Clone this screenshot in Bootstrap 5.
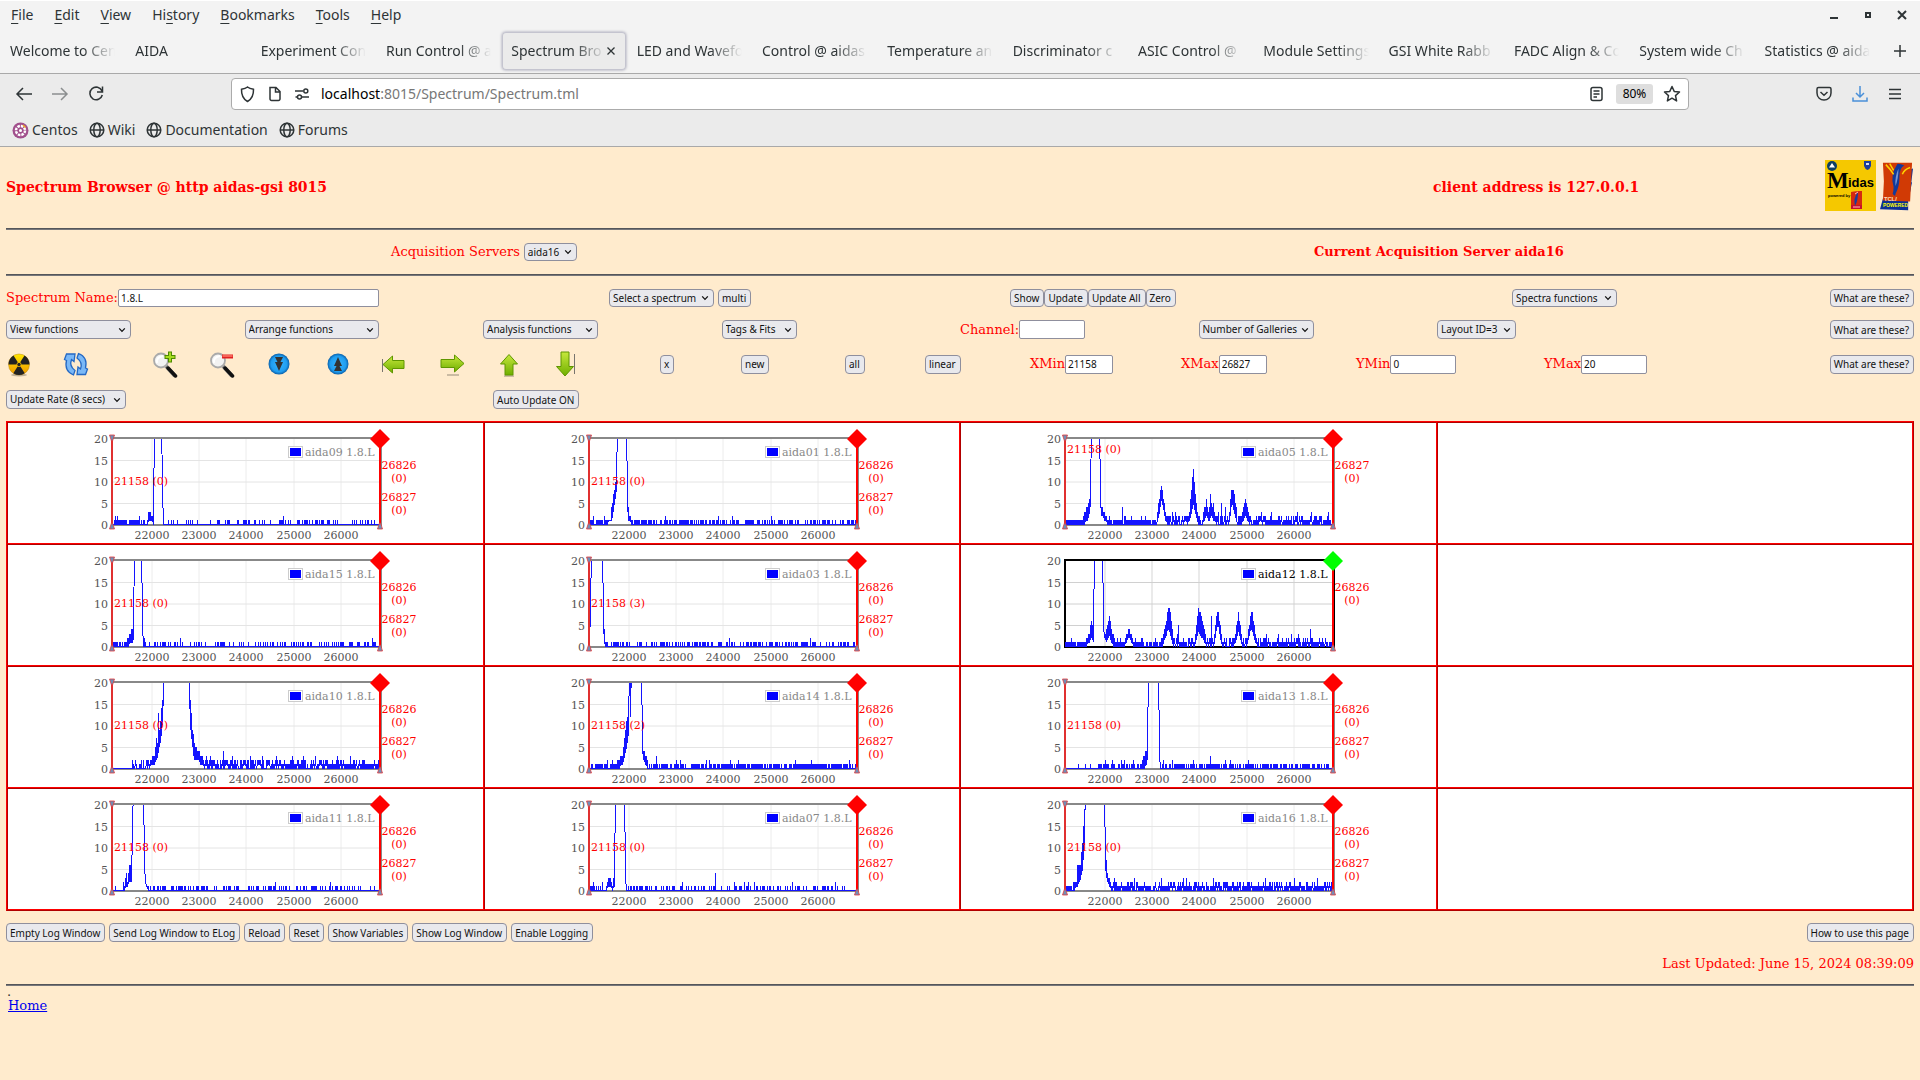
<!DOCTYPE html>
<html lang="en">
<head>
<meta charset="utf-8">
<meta name="viewport" content="width=device-width, initial-scale=1">
<title>Spectrum Browser @ aidas-gsi</title>
<link href="https://cdn.jsdelivr.net/npm/bootstrap@5.3.0/dist/css/bootstrap.min.css" rel="stylesheet">
<style>
:root { --ui: "Noto Sans", "Open Sans", sans-serif; --doc: "DejaVu Serif", serif; }
body { background: #ffebcd; font-family: var(--doc); font-size: 13px; line-height: 16px; color: #f00; }
button { font-family: var(--ui); }
/* browser frame */
.browser { font-family: var(--ui); font-size: 14px; line-height: 20px; color: #2e3436; background: #f3f3f3; border-top: 1px solid #fff; }
.browser button { border: 0; background: none; padding: 0; color: inherit; font-size: inherit; line-height: inherit; }
.browser svg { fill: none; stroke: #2e3436; stroke-width: 1.5; display: block; }
.menus { height: 28px; padding: 0 11px; gap: 21px; }
.menus u { text-underline-offset: 3px; }
.wm { gap: 20px; }
.tabs { height: 44px; }
.tab-item { flex: 1 1 0; min-width: 0; height: 38px; padding: 0 10px; border-radius: 4px; }
.tab-item a { color: inherit; text-decoration: none; overflow: hidden; white-space: nowrap; flex: 1; -webkit-mask-image: linear-gradient(to left, transparent, #000 32px); mask-image: linear-gradient(to left, transparent, #000 32px); }
.tab-item.on { background: #ebebeb; box-shadow: 0 0 3px #9a9aac, inset 0 0 0 1px #c4c4cf; margin: 0 1px; padding: 0 9px; }
.plus { width: 40px; }
.tools { background: #ebebeb; border-top: 1px solid #a9a9a9; border-bottom: 1px solid #a9a9a9; height: 74px; padding-top: 4px; }
.bar { height: 32px; }
.side-l { width: 231px; padding-left: 15px; gap: 18px; }
.side-r { width: 231px; padding-right: 17px; gap: 18px; }
.urlbox { height: 32px; background: #fff; border: 1px solid #ababab; border-radius: 4px; padding: 0 7px; gap: 10px; }
.url { color: #777; }
.url b { font-weight: 400; color: #000; }
.urlbox .zoomed { background: #dedede; border-radius: 3px; font-size: 12px; width: 37px; height: 20px; text-align: center; color: #000; }
.marks { height: 40px; padding: 0 12px; gap: 11px; }
.marks a { color: inherit; text-decoration: none; gap: 3px; }
/* page */
.page { padding: 13px 6px 0; }
.rule { height: 2px; background: #55565a; border-bottom: 1px solid #77777b; }
.last-rule { margin-top: 12px; }
.grid { display: grid; align-items: center; }
.g-title { grid-template-columns: 1427fr 384fr 97fr; height: 51px; margin-bottom: 17px; }
.g-title h1, .g-title h2 { font-size: 14px; font-weight: 700; line-height: 20px; margin: 2px 0 0; }
.g-acq { grid-template-columns: 385fr 923fr 600fr; height: 18px; margin: 13px 0; }
.g-name { grid-template-columns: 603fr 401fr 502fr 311fr 91fr; height: 18px; margin: 13px 0; }
.g-func { grid-template-columns: repeat(8, 1fr); height: 19px; margin-bottom: 11px; }
.g-tool { grid-template-columns: 57fr 89fr 57fr 57fr 59fr 56fr 58fr 57fr 56fr 108fr 81fr 104fr 80fr 105fr 151fr 175fr 188fr 370fr; height: 28px; margin-bottom: 12px; }
.g-rate { grid-template-columns: 487fr 1421fr; height: 19px; margin-bottom: 12px; }
.grid > div { display: flex; align-items: center; min-width: 0; white-space: nowrap; }
.grid > .end { justify-content: flex-end; }
.ctl { height: 19px; font: 10px/16px var(--ui); color: #111; background-color: #e9e9ed; border: 1px solid #8f8f9d; border-radius: 4px; padding: 0 4px 0 3px; white-space: nowrap; }
.g-acq .ctl, .g-name .ctl { height: 18px; }
select.ctl { appearance: none; padding: 0 4px 1px 3px; background-image: url("data:image/svg+xml,%3Csvg xmlns='http://www.w3.org/2000/svg' width='8' height='8'%3E%3Cpath d='M1.2 2.4 4 5.4 6.8 2.4' fill='none' stroke='%23111' stroke-width='1.3'/%3E%3C/svg%3E"); background-repeat: no-repeat; background-position: right 4px center; }
input.ctl { background: #fff; border-radius: 2px; padding: 0 2px; }
.w53 { width: 53px; } .w75 { width: 75px; } .w79 { width: 79px; } .w105 { width: 105px; } .w115 { width: 115px; } .w120 { width: 120px; } .w125 { width: 125px; } .w134 { width: 134px; }
.i48 { width: 48px; } .i66 { width: 66px; } .i261 { width: 261px; }
.ico { border: 0; background: none; padding: 0; width: 26px; height: 28px; }
.ico svg { display: block; }
.gallery { width: 100%; table-layout: fixed; border-collapse: separate; border-spacing: 0; border: 1px solid; border-color: #f00 #b00000 #b00000 #f00; background: #fff; margin-bottom: 12px; }
.gallery td { height: 122px; padding: 0; border: 1px solid; border-color: #b00000 #f00 #f00 #b00000; text-align: center; vertical-align: top; }
.gallery svg { display: block; margin: 0 auto; overflow: visible; font: 11px var(--doc); }
.foot { height: 19px; gap: 4px; margin-bottom: 14px; }
.dot { color: #333; line-height: 12px; padding-left: 1px; }
.home { color: #00e; margin-left: 2px; }
</style>
<script src="https://cdn.jsdelivr.net/npm/bootstrap@5.3.0/dist/js/bootstrap.bundle.min.js"></script>
</head>
<body>
<header class="browser">
  <div class="menus d-flex align-items-center">
    <button><u>F</u>ile</button><button><u>E</u>dit</button><button><u>V</u>iew</button><button>Hi<u>s</u>tory</button><button><u>B</u>ookmarks</button><button><u>T</u>ools</button><button><u>H</u>elp</button>
    <div class="wm d-flex ms-auto">
      <button aria-label="Minimize"><svg width="14" height="14" viewBox="0 0 14 14"><path d="M3 10h8" stroke-width="2"/></svg></button>
      <button aria-label="Restore"><svg width="14" height="14" viewBox="0 0 14 14"><path d="M5 5h4v4H5z" stroke-width="2"/></svg></button>
      <button aria-label="Close"><svg width="14" height="14" viewBox="0 0 14 14"><path d="M3 3l8 8M11 3l-8 8" stroke-width="2"/></svg></button>
    </div>
  </div>
  <nav class="tabs d-flex align-items-center" id="tabs"></nav>
  <div class="tools">
    <div class="bar d-flex">
      <div class="side-l d-flex align-items-center">
        <button aria-label="Back"><svg width="18" height="18" viewBox="0 0 18 18"><path d="M17 9H2M8 3L2 9l6 6"/></svg></button>
        <button aria-label="Forward" class="opacity-50"><svg width="18" height="18" viewBox="0 0 18 18"><path d="M1 9h15M10 3l6 6-6 6"/></svg></button>
        <button aria-label="Reload"><svg width="18" height="18" viewBox="0 0 18 18"><path d="M15 6A6.3 6.3 0 1 0 15.3 10M15.5 1.5V7H10"/></svg></button>
      </div>
      <div class="urlbox d-flex align-items-center flex-grow-1">
        <svg width="17" height="18" viewBox="0 0 17 18"><path d="M8.500 2C6.500 3.500 4 4 2.500 4.300 2.300 10 4 14 8.500 16.500 13 14 14.700 10 14.500 4.300 13 4 10.500 3.500 8.500 2z"/></svg>
        <svg width="17" height="18" viewBox="0 0 17 18"><path d="M4 2.500h6l4 4V14a1.500 1.500 0 0 1-1.500 1.500h-7A1.500 1.500 0 0 1 4 14zM9.500 2.500V7H14"/></svg>
        <svg width="18" height="18" viewBox="0 0 18 18"><path d="M2 6h8M16 12H9M2.500 12h2"/><circle cx="12.800" cy="6" r="2"/><circle cx="6.500" cy="12" r="2"/></svg>
        <span class="url text-nowrap" role="textbox" aria-label="Address"><b>localhost</b>:8015/Spectrum/Spectrum.tml</span>
        <svg class="ms-auto" width="17" height="18" viewBox="0 0 17 18"><rect x="2" y="2.500" width="11" height="13" rx="2"/><path d="M4.500 6h6M4.500 9h6M4.500 12h3.500" stroke-width="1.300"/></svg>
        <button class="zoomed">80%</button>
        <svg width="18" height="18" viewBox="0 0 18 18"><path d="M9 1.500l2.200 4.900 5.300.6-4 3.600 1.100 5.300L9 13.200l-4.600 2.700 1.100-5.300-4-3.600 5.300-.6z" stroke-linejoin="round"/></svg>
      </div>
      <div class="side-r d-flex align-items-center justify-content-end">
        <button aria-label="Save to Pocket"><svg width="18" height="18" viewBox="0 0 18 18"><path d="M3.500 2.500h11a1.500 1.500 0 0 1 1.500 1.500v4c0 9.300-14 9.300-14 0V4a1.500 1.500 0 0 1 1.500-1.500zM5.500 7L9 10.200 12.500 7"/></svg></button>
        <button aria-label="Downloads"><svg width="18" height="18" viewBox="0 0 18 18"><path stroke="#4a90d9" d="M9 1v11M5 8l4 4 4-4M2 12.500V16h14v-3.500"/></svg></button>
        <button aria-label="Menu"><svg width="16" height="18" viewBox="0 0 16 18"><path d="M2 4.500h12M2 9h12M2 13.500h12"/></svg></button>
      </div>
    </div>
    <div class="marks d-flex align-items-center">
      <a href="#" class="d-flex align-items-center"><svg width="17" height="17" viewBox="0 0 17 17"><circle cx="8.500" cy="8.500" r="8" fill="#a14f8c" stroke="none"/><circle cx="8.500" cy="8.500" r="4.500" stroke="#fff" stroke-width="2.500" stroke-dasharray="2.500 1"/><circle cx="8.500" cy="8.500" r="1.500" fill="#fff" stroke="none"/><path d="M11 3l2.500 2.500" stroke="#efa724"/></svg>Centos</a>
      <a href="#" class="d-flex align-items-center"><svg width="16" height="16" viewBox="0 0 16 16"><use href="#globe"/></svg>Wiki</a>
      <a href="#" class="d-flex align-items-center"><svg width="16" height="16" viewBox="0 0 16 16"><use href="#globe"/></svg>Documentation</a>
      <a href="#" class="d-flex align-items-center"><svg width="16" height="16" viewBox="0 0 16 16"><g id="globe"><circle cx="8" cy="8" r="6.800"/><ellipse cx="8" cy="8" rx="3.200" ry="6.800"/><path d="M1 8h14"/></g></svg>Forums</a>
    </div>
  </div>
</header>

<main class="page">
  <div class="grid g-title">
    <h1>Spectrum Browser @ http aidas-gsi 8015</h1>
    <h2>client address is 127.0.0.1</h2>
    <div class="end">
      <svg width="51" height="51" viewBox="0 0 51 51" class="me-1"><rect width="51" height="51" fill="#f5c800"/><circle cx="7" cy="6" r="5" fill="#0e3f63"/><path d="M4 7.500h6L7 3z" fill="#fff"/><path d="M39 1h7v5q-1 3-3.500 4Q40 9 39 6z" fill="#1c3c9c"/><path d="M41 3h3v2h-3z" fill="#d9e0ee"/><text x="2" y="28" font-family="Liberation Serif, serif" font-size="23" font-weight="700">M</text><text x="23" y="27" font-family="Liberation Sans, sans-serif" font-size="13" font-weight="700">idas</text><text x="3" y="37" font-family="Liberation Sans, sans-serif" font-size="4" font-weight="700">powered by</text><path d="M26 32l11-1v18H26z" fill="#c8102e"/><path d="M26 32l11-1v14H26z" fill="#d42a10"/><path d="M33 32q-5 6-3 14 3-5 3-14z" fill="#173c9e"/><path d="M30 34l3-2M28 47h7" stroke="#fbb" stroke-width="1"/></svg>
      <svg width="34" height="51" viewBox="0 0 35 51"><path d="M3 39l-3 11 29 1v-9l4-20z" fill="#0b2f96"/><path d="M28 10l6-2-4 32z" fill="#0b2f96"/><path d="M3 2l30 0-2 40-28-1 1-20z" fill="#d13a05"/><path d="M18 3q-8 12-4 24 0 5-1 7 3 4 3 0 4-7 4-17 0-10 5-12-3-2-7-2z" fill="#123a9a"/><path d="M19 8q-4 9-3 18 3-8 3-18z" fill="#7696d4"/><path d="M6 4q5 5 8 10M23 14q2-5 8-7M10 3l4 7" stroke="#ffd400" stroke-width="1.500" fill="none"/><text x="4" y="41" font-family="Liberation Sans, sans-serif" font-size="6" fill="#ffe0c0" font-weight="700">TCL/</text><text x="3" y="48" font-family="Liberation Sans, sans-serif" font-size="5" fill="#ff0" font-weight="700">POWERED</text></svg>
    </div>
  </div>
  <div class="rule"></div>
  <div class="grid g-acq">
    <div></div>
    <div><label for="server" class="me-1">Acquisition Servers</label><select id="server" class="ctl w53"><option>aida16</option></select></div>
    <div class="fw-bold">Current Acquisition Server aida16</div>
  </div>
  <div class="rule"></div>
  <div class="grid g-name">
    <div><label for="sname">Spectrum Name:</label><input id="sname" class="ctl i261" value="1.8.L"></div>
    <div><select class="ctl w105 me-1" aria-label="Spectrum"><option>Select a spectrum</option></select><button class="ctl">multi</button></div>
    <div><button class="ctl">Show</button><button class="ctl">Update</button><button class="ctl">Update All</button><button class="ctl">Zero</button></div>
    <div><select class="ctl w105" aria-label="Spectra functions"><option>Spectra functions</option></select></div>
    <div class="end"><button class="ctl">What are these?</button></div>
  </div>
  <div class="grid g-func">
    <div><select class="ctl w125" aria-label="View"><option>View functions</option></select></div>
    <div><select class="ctl w134" aria-label="Arrange"><option>Arrange functions</option></select></div>
    <div><select class="ctl w115" aria-label="Analysis"><option>Analysis functions</option></select></div>
    <div><select class="ctl w75" aria-label="Tags"><option>Tags &amp; Fits</option></select></div>
    <div><label for="chan">Channel:</label><input id="chan" class="ctl i66"></div>
    <div><select class="ctl w115" aria-label="Galleries"><option>Number of Galleries</option></select></div>
    <div><select class="ctl w79" aria-label="Layout"><option>Layout ID=3</option></select></div>
    <div class="end"><button class="ctl">What are these?</button></div>
  </div>
  <svg width="0" height="0" class="position-absolute" aria-hidden="true"><defs>
    <linearGradient id="gy" x2="0" y2="1"><stop stop-color="#ffe600"/><stop offset="1" stop-color="#f09800"/></linearGradient>
    <linearGradient id="gg" x2="0" y2="1"><stop stop-color="#c6e83c"/><stop offset="1" stop-color="#6fae00"/></linearGradient>
    <radialGradient id="gb"><stop stop-color="#38b6ff"/><stop offset=".75" stop-color="#1f9df0"/><stop offset="1" stop-color="#0a5fa8"/></radialGradient>
    <g id="lens"><path d="M14 15l9 10" stroke="#888" stroke-width="4"/><path d="M16 17l7.500 8" stroke="#111" stroke-width="3.500" stroke-linecap="round"/><circle cx="9" cy="9.500" r="7" fill="#f2f2f2" stroke="#aaa" stroke-width="1.800"/><path d="M5 12q-1-6 6-7" stroke="#fff" stroke-width="2" fill="none"/></g>
  </defs></svg>
  <div class="grid g-tool">
    <div><button class="ico" aria-label="Zero all"><svg width="26" height="28" viewBox="0 0 26 28"><ellipse cx="13" cy="25" rx="8" ry="1.500" fill="#000" opacity=".25"/><circle cx="13" cy="14.500" r="10.500" fill="url(#gy)" stroke="#b8860b" stroke-width=".5"/><path d="M11.800 12.200L7.500 5.500Q2.500 8.500 2.500 14.500H10.500Q10.600 13 11.800 12.200zM14.200 12.200l4.300-6.700Q23.500 8.500 23.500 14.500H15.500Q15.400 13 14.200 12.200zM13 17q1 0 1.400-.4l4.300 6.600Q13 27 7.300 23.200l4.300-6.600Q12 17 13 17z" fill="#222"/><circle cx="13" cy="14.500" r="1.700" fill="#222"/></svg></button></div>
    <div><button class="ico" aria-label="Refresh"><svg width="26" height="28" viewBox="0 0 26 28"><path d="M10.500 25Q1 21 3.500 10.500L1.500 9.500 3.500 4h8.500L11 11.500 8.500 9.500Q6 16 12 20.500zM15.500 3.500q9.500 3.500 7 14.500l2 1-2 5.500h-8.500l1-7.500 2.500 2Q20 12.500 14 8z" fill="#7ab8f7" stroke="#2468c4" stroke-width="1.300"/></svg></button></div>
    <div><button class="ico" aria-label="Zoom in"><svg width="26" height="28" viewBox="0 0 26 28"><use href="#lens" y="1"/><path d="M18 1.500v11M12.500 7h11" stroke="#4e8a00" stroke-width="4"/><path d="M18 2.500v9M13.500 7h9" stroke="#a6dc20" stroke-width="2"/></svg></button></div>
    <div><button class="ico" aria-label="Zoom out"><svg width="26" height="28" viewBox="0 0 26 28"><use href="#lens" y="1"/><path d="M13 6.500h11" stroke="#e02020" stroke-width="4"/><path d="M13.500 6h10" stroke="#ff7a6a" stroke-width="1.500"/></svg></button></div>
    <div><button class="ico" aria-label="Compress"><svg width="26" height="28" viewBox="0 0 26 28"><circle cx="13" cy="14" r="10.500" fill="url(#gb)"/><path d="M9 7h8l-2.500 5H17l-4 9-4-9h2.500z" fill="#333"/></svg></button></div>
    <div><button class="ico" aria-label="Expand"><svg width="26" height="28" viewBox="0 0 26 28"><circle cx="13" cy="14" r="10.500" fill="url(#gb)"/><path d="M9 21h8l-2.500-5H17l-4-9-4 9h2.500z" fill="#333"/></svg></button></div>
    <div><button class="ico" aria-label="Left"><svg width="26" height="28" viewBox="0 0 26 28"><path d="M1.500 9v13" stroke="#555" stroke-width=".8"/><path d="M2 14.500L11.500 6v4.500H23v8H11.500V23z" fill="url(#gg)" stroke="#5f9600"/></svg></button></div>
    <div><button class="ico" aria-label="Right"><svg width="26" height="28" viewBox="0 0 26 28"><path d="M8 25h12" stroke="#000" opacity=".2" stroke-width="2"/><path d="M25 13.500L15.500 5v4.500H2v8h13.500V22z" fill="url(#gg)" stroke="#5f9600"/></svg></button></div>
    <div><button class="ico" aria-label="Up"><svg width="26" height="28" viewBox="0 0 26 28"><path d="M8 26h10" stroke="#000" opacity=".2" stroke-width="2"/><path d="M13 4.500L4.500 14H9v11h8V14h4.500z" fill="url(#gg)" stroke="#5f9600"/></svg></button></div>
    <div><button class="ico" aria-label="Down"><svg width="26" height="28" viewBox="0 0 26 28"><path d="M22.500 4v20" stroke="#555" stroke-width=".8"/><path d="M13 26L4.500 16.500H9V2h8v14.500h4.500z" fill="url(#gg)" stroke="#5f9600"/></svg></button></div>
    <div><button class="ctl">x</button></div>
    <div><button class="ctl">new</button></div>
    <div><button class="ctl">all</button></div>
    <div><button class="ctl">linear</button></div>
    <div><label for="xmin">XMin</label><input id="xmin" class="ctl i48" value="21158"></div>
    <div><label for="xmax">XMax</label><input id="xmax" class="ctl i48" value="26827"></div>
    <div><label for="ymin">YMin</label><input id="ymin" class="ctl i66" value="0"></div>
    <div class="justify-content-between"><span class="d-flex align-items-center"><label for="ymax">YMax</label><input id="ymax" class="ctl i66" value="20"></span><button class="ctl">What are these?</button></div>
  </div>
  <div class="grid g-rate">
    <div><select class="ctl w120" aria-label="Update rate"><option>Update Rate (8 secs)</option></select></div>
    <div><button class="ctl">Auto Update ON</button></div>
  </div>
  <table class="gallery" id="gallery"></table>
  <div class="foot d-flex">
    <button class="ctl">Empty Log Window</button><button class="ctl">Send Log Window to ELog</button><button class="ctl">Reload</button><button class="ctl">Reset</button><button class="ctl">Show Variables</button><button class="ctl">Show Log Window</button><button class="ctl">Enable Logging</button>
    <button class="ctl ms-auto">How to use this page</button>
  </div>
  <div class="text-end">Last Updated: June 15, 2024 08:39:09</div>
  <div class="rule last-rule"></div>
  <div class="dot">.</div>
  <a href="#" class="home">Home</a>
</main>
<script>
const tabs = ["Welcome to Cen", "AIDA", "Experiment Con", "Run Control @ a", "Spectrum Bro", "LED and Wavefo", "Control @ aidas", "Temperature an", "Discriminator c", "ASIC Control @", "Module Settings", "GSI White Rabb", "FADC Align & Co", "System wide Ch", "Statistics @ aida"];
document.getElementById("tabs").innerHTML = tabs.map((t, i) => i === 4
  ? `<div class="tab-item on d-flex align-items-center"><a href="#">${t}</a><button aria-label="Close tab"><svg width="12" height="12" viewBox="0 0 12 12"><path d="M2.500 2.500l7 7M9.500 2.500l-7 7" stroke-width="1.300"/></svg></button></div>`
  : `<div class="tab-item d-flex align-items-center"><a href="#">${t.replace("&", "&amp;")}</a></div>`).join("")
  + `<button class="plus d-flex justify-content-center" aria-label="New tab"><svg width="14" height="14" viewBox="0 0 14 14"><path d="M7 1v12M1 7h12"/></svg></button>`;

/* env: lists of [x, low, high] envelope points; noise: [from, to, chance of 1, chance of 2]; sp: single spikes [x, height] */
const T = 25;
const plots = [
 {n:"09", env:[[[35,0,1],[37,1,3],[39,1,2],[41,0,2],[42,T,T],[49,T,T],[50,8,8],[51,0,0]]], noise:[[0,25,.85,0],[25,35,.4,0],[51,262,.34,0]], sp:[[3,2],[5,2],[27,2],[36,3],[171,2]]},
 {n:"01", env:[[[17,0,1],[21,1,1],[22,1,4],[25,5,8],[27,8,11],[28,T,T],[37,T,T],[38,5,8],[39,1,4],[40,1,2],[42,0,1]]], noise:[[0,17,.75,0],[42,200,.62,0],[200,268,.38,0]], sp:[[4,2],[15,2],[76,2],[129,2],[143,2],[182,2]]},
 {n:"05", env:[[[18,0,2],[22,1,4],[24,3,6],[25,5,8],[26,T,T],[34,T,T],[35,6,9],[36,2,4],[40,1,2],[42,0,1]],[[92,1,3],[94,3,6],[96,6,9],[98,4,6],[100,1,3]],[[124,1,3],[126,3,8],[128,5,13],[130,3,7],[132,1,3]],[[138,1,3],[141,2,5],[143,1,3],[146,2,5],[149,1,3]],[[164,1,3],[166,5,8],[168,4,8],[171,1,4]],[[177,1,3],[180,2,6],[183,1,3]]], noise:[[0,17,.95,0],[42,92,.9,.08],[92,185,.92,.65],[185,268,.92,.4]], sp:[[57,4],[59,2],[103,2],[107,3],[110,3],[141,6],[145,7],[148,5],[153,3],[156,5],[160,4],[196,3],[206,3],[232,3],[246,3],[263,3]]},
 {n:"15", env:[[[15,0,2],[18,1,3],[20,1,4],[21,2,5],[22,T,T],[29,T,T],[30,5,5],[31,0,2],[33,0,1]]], noise:[[0,15,.85,0],[33,264,.36,0]], sp:[[68,2],[260,2]]},
 {n:"03", lab:3, env:[[[0,3,3],[1,6,10],[2,T,T],[13,T,T],[14,5,7],[15,1,4],[16,0,1]]], noise:[[16,268,.5,0]], sp:[[140,2],[221,2]]},
 {n:"12", env:[[[19,0,1],[24,1,3],[26,2,6],[28,1,4],[29,T,T],[37,T,T],[38,5,5],[39,2,2],[41,1,4],[44,3,7],[46,1,4],[49,0,2]],[[60,1,2],[64,2,4],[67,1,2]],[[98,1,3],[101,3,6],[103,4,9],[105,3,8],[107,1,4]],[[130,1,3],[133,4,9],[136,2,7],[140,1,3]],[[149,1,3],[151,4,7],[153,5,8],[156,1,3]],[[170,1,3],[173,4,8],[176,1,3]],[[182,1,2],[185,4,7],[187,4,8],[190,1,3]]], noise:[[0,20,.9,.05],[49,98,.88,.15],[98,190,.95,.5],[190,268,.92,.35]], sp:[[112,3],[113,5],[146,7],[201,3],[213,3],[226,3],[233,3],[245,4]]},
 {n:"10", env:[[[38,1,2],[42,1,3],[44,2,7],[45,3,6],[46,4,13],[47,6,9],[48,6,11],[50,11,16],[52,T,T],[76,T,T],[78,10,16],[80,6,9],[82,2,6],[85,2,4],[90,1,3]]], noise:[[19,38,.7,.4],[90,200,.95,.6],[200,266,.92,.45]], sp:[[94,3],[98,3],[111,4],[120,3],[138,3],[150,3],[164,3],[180,3],[191,3],[203,3],[225,3],[238,3],[250,2]]},
 {n:"14", lab:2, env:[[[28,0,2],[33,1,3],[35,3,7],[37,5,11],[39,8,12],[40,T,T],[41,12,T],[42,T,T],[52,T,T],[53,5,8],[54,2,4],[58,0,2]]], noise:[[0,28,.85,0],[58,268,.78,0]], sp:[[18,2],[23,2],[67,3],[87,2],[91,2],[117,2],[120,2],[141,2],[149,2],[206,2],[222,2],[260,2]]},
 {n:"13", env:[[[76,0,1],[78,0,3],[81,1,4],[82,3,4],[83,T,T],[93,T,T],[94,3,3],[95,0,1]]], noise:[[33,76,.65,.03],[95,268,.7,0]], sp:[[13,1],[20,1],[25,1],[47,2],[56,2],[59,2],[68,2],[98,2],[107,2],[128,2],[145,3],[160,2],[165,2],[183,2]]},
 {n:"11", env:[[[12,0,1],[14,1,4],[15,1,2],[17,2,6],[19,2,6],[21,T,T],[31,T,T],[32,6,6],[33,2,3],[34,1,1],[36,0,1]]], noise:[[0,12,.25,0],[36,240,.42,0],[240,268,.15,0]], sp:[[11,2],[163,2],[218,2]]},
 {n:"07", env:[[[17,0,1],[19,1,3],[21,1,3],[23,0,1],[25,1,4],[26,T,T],[35,T,T],[36,3,3],[37,0,0]]], noise:[[0,17,.55,0],[37,268,.45,0]], sp:[[4,2],[13,2],[93,2],[126,4],[145,2],[155,2],[159,2],[165,2],[203,2],[246,2]]},
 {n:"16", env:[[[8,0,2],[11,1,2],[12,1,6],[15,3,6],[17,5,11],[19,12,19],[20,T,T],[39,T,T],[40,5,9],[42,2,4],[45,1,2]]], noise:[[0,8,.9,0],[45,268,.93,.38]], sp:[[49,3],[69,3],[96,3],[118,3],[121,3],[148,3],[200,3],[229,3],[252,3]]}
];
function trace(p, seed) {
  let s = seed * 7919 + 13;
  const rnd = () => (s = (s * 1103515245 + 12345) % 2147483648) / 2147483648;
  const lo = Array(268).fill(0), hi = Array(268).fill(0);
  for (const [a, b, c1, c2] of p.noise) for (let x = a; x <= Math.min(b, 267); x++) {
    if (rnd() < c1) hi[x] = rnd() < c2 ? 2 : 1;
    if (c2 > .3 && rnd() < .45 && hi[x] > 1) lo[x] = 1;
  }
  for (const e of p.env) for (let i = 1; i < e.length; i++)
    for (let x = e[i - 1][0]; x <= e[i][0]; x++) {
      const f = (x - e[i - 1][0]) / (e[i][0] - e[i - 1][0]);
      lo[x] = Math.round(e[i - 1][1] + f * (e[i][1] - e[i - 1][1]));
      hi[x] = Math.round(e[i - 1][2] + f * (e[i][2] - e[i - 1][2]));
    }
  for (const [x, v] of p.sp) hi[x] = v;
  const y = v => (101.5 - v * 4.3).toFixed(1);
  let d = "";
  for (let x = 0; x < 268; x++)
    d += (x ? "L" : "M") + (39.5 + x) + " " + y(lo[x]) + (hi[x] !== lo[x] ? "V" + y(hi[x]) + "V" + y(lo[x]) : "");
  return d;
}
function chart(p, k) {
  const on = p.n === "12", L = 39, R = 307, Y0 = 16, Y1 = 102, fr = on ? "#000" : "#888";
  let g = "";
  for (let i = 0; i < 5; i++) {
    const x = Math.round(L + (842 + i * 1000) * .04727);
    g += `<path d="M${x} ${Y0}V${Y1}" stroke="${on ? "#d5d5d5" : "#ececec"}"/><text x="${x}" y="116" text-anchor="middle" fill="#545454">${22 + i}000</text>`;
  }
  for (let v = 0; v <= 20; v += 5) {
    const y = Y1 - v * 4.3;
    if (v % 20) g += `<path d="M${L} ${y}H${R}" stroke="${on ? "#d0d0d0" : "#e4e4e4"}"/>`;
    g += `<text x="${L - 4}" y="${Math.round(y) + 4}" text-anchor="end" fill="#545454">${v}</text>`;
  }
  const tri = (x, y, s) => `<path d="M${x - 2} ${y}h5l-2 ${s * 6}h-1z" fill="#6f8fb8" stroke="#e33a3a" stroke-width=".8"/>`;
  const right = p.n === "05" ? [26827] : on ? [26826] : [26826, 26827];
  return `<svg width="344" height="120" viewBox="0 0 344 120"><defs><clipPath id="c${k}"><rect x="${L}" y="${Y0}" width="268" height="87"/></clipPath></defs>${g}
  <rect x="${L}" y="15" width="269" height="87" fill="none" stroke="${fr}" stroke-width="2"/>
  <path d="${trace(p, k + 1)}" clip-path="url(#c${k})" fill="none" stroke="#1414ff" stroke-width="1" shape-rendering="crispEdges"/>
  <rect x="215.500" y="23.500" width="14" height="11" fill="#fff" stroke="#ccc"/><rect x="217" y="25" width="11" height="8" fill="#00f"/>
  <text x="232" y="33" fill="${on ? "#000" : "#888"}">aida${p.n} 1.8.L</text>
  ${on ? "" : `<path d="M39 15V103" stroke="#e03030" stroke-width="2"/>${tri(38.5, 12, 1)}${tri(38.5, 106, -1)}<text x="41" y="${p.n === "05" ? 30 : 62}" fill="#f00">21158 (${p.lab || 0})</text>`}
  <path d="M307 15V103" stroke="#f00" stroke-width="2"/>${tri(306.5, 106, -1)}
  <path d="M307 6l10 10-10 10-10-10z" fill="${on ? "#0f0" : "#f00"}"/>
  ${right.map((r, i) => `<text x="326" y="${46 + 32 * i}" text-anchor="middle" fill="#f00">${r}</text><text x="326" y="${59 + 32 * i}" text-anchor="middle" fill="#f00">(0)</text>`).join("")}
  </svg>`;
}
let rows = "";
for (let r = 0; r < 4; r++) rows += "<tr>" + [0, 1, 2].map(c => `<td>${chart(plots[r * 3 + c], r * 3 + c)}</td>`).join("") + "<td></td></tr>";
document.getElementById("gallery").innerHTML = rows;
</script>
</body>
</html>
